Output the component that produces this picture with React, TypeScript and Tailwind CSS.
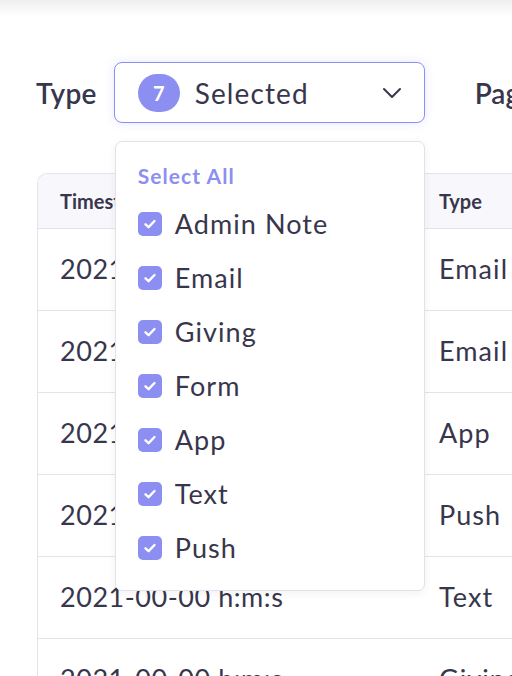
import React from "react";

const items = ["Admin Note", "Email", "Giving", "Form", "App", "Text", "Push"];
const rows = ["Email", "Email", "App", "Push", "Text", "Giving"];

function Check() {
  return (
    <span className="flex h-[24px] w-[24px] shrink-0 items-center justify-center rounded-[5px] bg-[#8c8ef2]">
      <svg width="16" height="16" viewBox="0 0 16 16" fill="none">
        <path d="M3.5 8.3 L6.6 11.2 L12.5 5" stroke="white" strokeWidth="2.4" strokeLinecap="round" strokeLinejoin="round" />
      </svg>
    </span>
  );
}

export default function App() {
  return (
    <div className="relative h-[676px] w-full overflow-hidden bg-white text-[#38364c]" style={{ fontFamily: "Lato, 'Open Sans', sans-serif" }}>
      <div className="h-[16px] bg-gradient-to-b from-[#eeeeee] to-white" />
      <div className="flex items-center pl-[36px] pt-[46px]">
        <span className="w-[61px] text-[28px] font-semibold tracking-[0.01em]">Type</span>
        <div className="relative ml-[17px]">
          <div className="flex h-[61px] w-[311px] items-center rounded-[8px] border-[1.5px] border-[#8b8ef5] bg-white pl-[23px] pr-[22px] shadow-[0_0_10px_rgba(139,142,245,0.22)]">
            <span className="flex h-[38px] w-[42px] items-center justify-center rounded-full bg-[#8c8ef2] text-[20px] font-bold text-white">7</span>
            <span className="ml-[15px] text-[28px] tracking-[0.04em]">Selected</span>
            <svg className="ml-auto" width="20" height="12" viewBox="0 0 20 12" fill="none">
              <path d="M2 2 L10 10 L18 2" stroke="#38364c" strokeWidth="2" strokeLinecap="round" strokeLinejoin="round" />
            </svg>
          </div>
          <div className="absolute left-[1px] top-[79px] z-10 h-[450px] w-[310px] rounded-[7px] border border-[#e2e1ea] bg-white pl-[22px] pt-[20px] shadow-[0_2px_8px_rgba(0,0,0,0.06)]">
            <div className="h-[28px] text-[21px] font-bold leading-[28px] tracking-[0.05em] text-[#8c8ef2]">Select All</div>
            <div className="mt-[7px] flex flex-col">
              {items.map((it) => (
                <div key={it} className="flex h-[54px] items-center gap-[13px]">
                  <Check />
                  <span className="text-[27px] tracking-[0.04em]">{it}</span>
                </div>
              ))}
            </div>
          </div>
        </div>
        <span className="ml-[50px] text-[28px] font-semibold">Page</span>
      </div>
      <div className="ml-[37px] mt-[50px] w-[600px] rounded-tl-[10px] border-l border-t border-[#e4e3ec]">
        <div className="flex h-[55px] items-center rounded-tl-[10px] border-b border-[#e4e3ec] bg-[#f8f8fc] text-[20px] font-bold">
          <div className="w-[379px] pl-[22px]">Timestamp</div>
          <div className="pl-[22px]">Type</div>
        </div>
        {rows.map((r, i) => (
          <div key={i} className="flex h-[82px] items-center border-b border-[#e4e3ec] text-[27px]">
            <div className="w-[379px] pl-[22px] tracking-[0.02em]">2021-00-00 h:m:s</div>
            <div className="pl-[22px] tracking-[0.04em]">{r}</div>
          </div>
        ))}
      </div>
    </div>
  );
}
